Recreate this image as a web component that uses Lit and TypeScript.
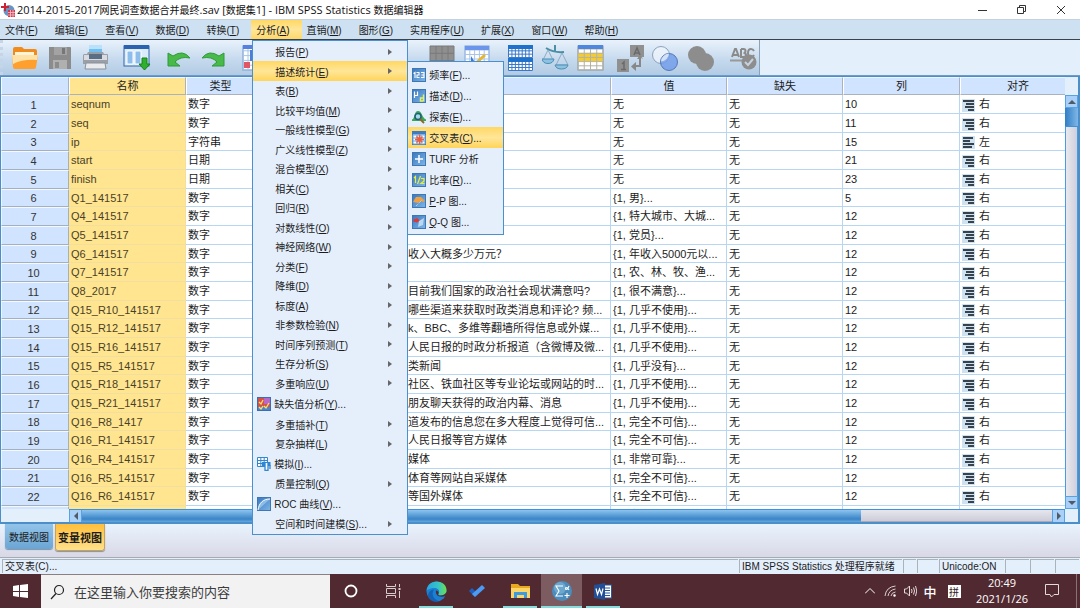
import { LitElement, html, css, svg, nothing } from "lit";
import { customElement, property } from "lit/decorators.js";
import { classMap } from "lit/directives/class-map.js";

type Label = [string, string, string?];
interface MenuEntry { label: Label; icon?: unknown; more?: boolean; sub?: MenuEntry[]; on?: boolean; }

const mnemonic = ([text, key, tail]: Label) => html`${text}${key ? html`(<u>${key}</u>)` : nothing}${tail ?? ""}`;

const gridLines = (x: number, y: number, w: number, h: number, nx: number, ny: number, c: string) => {
  const out: unknown[] = [];
  for (let i = 0; i <= nx; i++) out.push(svg`<path d="M${x + (i * w) / nx} ${y}v${h}" stroke=${c}/>`);
  for (let i = 0; i <= ny; i++) out.push(svg`<path d="M${x} ${y + (i * h) / ny}h${w}" stroke=${c}/>`);
  return out;
};

const tile = (body: unknown) => html`<svg width="14" height="14" viewBox="0 0 14 14" aria-hidden="true">
  <defs><linearGradient id="t" x1="0" y1="0" x2="1" y2="1"><stop offset="0" stop-color="#3a78be"/><stop offset="1" stop-color="#7db6e8"/></linearGradient></defs>
  <rect x=".5" y=".5" width="13" height="13" fill="url(#t)" stroke="#3f77b5"/>${body}</svg>`;

const small = {
  freq: tile(svg`<path d="M1.500 5.500L3 4.500V10M4.500 4.500h2.500V7H5v2.500h2.500M9 4.500h3V9.500H9M9.500 7h2.500" fill="none" stroke="#fff" stroke-width="1.100"/>`),
  desc: tile(svg`<path d="M2.500 9V2.500M2.500 6.500h3M5.500 2.500v4.500" fill="none" stroke="#fff" stroke-width="1.200"/><path d="M11.500 5.500V12M11.500 9h-3v3h3" fill="none" stroke="#dff06a" stroke-width="1.400"/>`),
  explore: html`<svg width="14" height="14" viewBox="0 0 14 14" aria-hidden="true"><path d="M0 9.500C3 9 2 1 6 1s4 7 8 8.500V11H0z" fill="#3aa852"/><circle cx="6" cy="6.500" r="3" fill="#a9d8ea" stroke="#1f5f7a" stroke-width="1.500"/><path d="M8 9l4 4" stroke="#8a6a2c" stroke-width="2"/></svg>`,
  cross: html`<svg width="14" height="14" viewBox="0 0 14 14" aria-hidden="true"><rect x=".5" y=".5" width="13" height="13" fill="#fff" stroke="#3b7dc4"/><path d="M1 2h12" stroke="#3b7dc4" stroke-width="3"/>${gridLines(1, 4, 12, 9, 3, 3, "#6aa5de")}<path d="M7.500 3.500v9.500M3 8.500h9M4.500 5.500l6 6M10.500 5.500l-6 6" stroke="#ee5a3c" stroke-width="1.400"/></svg>`,
  turf: tile(svg`<path d="M7 3v8M3 7h8" stroke="#fff" stroke-width="1.500"/>`),
  ratio: tile(svg`<path d="M2 5l1.500-1.500V10M8.500 3L5.500 11M9 5.500h3V8L9 10.500h3.500" fill="none" stroke="#e6f03c" stroke-width="1.200"/>`),
  pp: tile(svg`<path d="M1 8l3-5h5l4 4-2 1-2-1-3 2z" fill="#f0a040"/><path d="M4 12l6-6" stroke="#cfe6ff" stroke-dasharray="1 1"/>`),
  qq: tile(svg`<path d="M1.500 7V4h3V2.500L8 5.500 4.500 8V7z" fill="#d83a3a"/><path d="M7 6l5-3-1 7-5 2z" fill="#b9d8f2"/>`),
  missing: html`<svg width="14" height="14" viewBox="0 0 14 14" aria-hidden="true"><rect x=".5" y=".5" width="13" height="13" fill="#d6504a" stroke="#3b6db4"/><rect x="7" y="1" width="6" height="6" fill="#b868c8"/><path d="M1 10h12v3H1z" fill="#4a86cc"/><path d="M2 5l2 2 2-4M7 9l2 2 3-5M2 10l2 2 2-3" fill="none" stroke="#f6e36a" stroke-width="1.300"/></svg>`,
  sim: html`<svg width="14" height="14" viewBox="0 0 14 14" aria-hidden="true"><rect x=".5" y=".5" width="10" height="9" fill="#fff"/>${gridLines(0.5, 0.5, 10, 9, 3, 3, "#2f86d2")}<path d="M5 5h8.500v4H5z" fill="#2f86d2"/><path d="M8 6v7.500h3V6M13 8v4" fill="#fff" stroke="#2f86d2" stroke-width="1.300"/></svg>`,
  roc: tile(svg`<path d="M1 13C2 6 6 2 13 2L1 13z" fill="#8dbce6"/><path d="M1 13C2 6 6 2 13 2" fill="none" stroke="#fff"/>`),
};

const SUB: MenuEntry[] = [
  { label: ["频率", "F", "..."], icon: small.freq },
  { label: ["描述", "D", "..."], icon: small.desc },
  { label: ["探索", "E", "..."], icon: small.explore },
  { label: ["交叉表", "C", "..."], icon: small.cross, on: true },
  { label: ["TURF 分析", ""], icon: small.turf },
  { label: ["比率", "R", "..."], icon: small.ratio },
  { label: ["P-P 图...", ""], icon: small.pp },
  { label: ["Q-Q 图...", ""], icon: small.qq },
];

const MENU: MenuEntry[] = [
  { label: ["报告", "P"], more: true },
  { label: ["描述统计", "E"], more: true, sub: SUB, on: true },
  { label: ["表", "B"], more: true },
  { label: ["比较平均值", "M"], more: true },
  { label: ["一般线性模型", "G"], more: true },
  { label: ["广义线性模型", "Z"], more: true },
  { label: ["混合模型", "X"], more: true },
  { label: ["相关", "C"], more: true },
  { label: ["回归", "R"], more: true },
  { label: ["对数线性", "O"], more: true },
  { label: ["神经网络", "W"], more: true },
  { label: ["分类", "F"], more: true },
  { label: ["降维", "D"], more: true },
  { label: ["标度", "A"], more: true },
  { label: ["非参数检验", "N"], more: true },
  { label: ["时间序列预测", "T"], more: true },
  { label: ["生存分析", "S"], more: true },
  { label: ["多重响应", "U"], more: true },
  { label: ["缺失值分析", "Y", "..."], icon: small.missing },
  { label: ["多重插补", "T"], more: true },
  { label: ["复杂抽样", "L"], more: true },
  { label: ["模拟", "I", "..."], icon: small.sim },
  { label: ["质量控制", "Q"], more: true },
  { label: ["ROC 曲线", "V", "..."], icon: small.roc },
  { label: ["空间和时间建模", "S", "..."], more: true },
];

const TOP: Label[] = [
  ["文件", "F"], ["编辑", "E"], ["查看", "V"], ["数据", "D"], ["转换", "T"], ["分析", "A"],
  ["直销", "M"], ["图形", "G"], ["实用程序", "U"], ["扩展", "X"], ["窗口", "W"], ["帮助", "H"],
];

const NO = "无", NUM = "数字", RARE = "{1, 几乎不使用}...", DOUBT = "{1, 完全不可信}...";
const ROWS: [string, string, string, string, string][] = [
  ["seqnum", NUM, "", NO, "10"],
  ["seq", NUM, "", NO, "11"],
  ["ip", "字符串", "", NO, "15"],
  ["start", "日期", "", NO, "21"],
  ["finish", "日期", "", NO, "23"],
  ["Q1_141517", NUM, "", "{1, 男}...", "5"],
  ["Q4_141517", NUM, "", "{1, 特大城市、大城...", "12"],
  ["Q5_141517", NUM, "", "{1, 党员}...", "12"],
  ["Q6_141517", NUM, "收入大概多少万元？", "{1, 年收入5000元以...", "12"],
  ["Q7_141517", NUM, "", "{1, 农、林、牧、渔...", "12"],
  ["Q8_2017", NUM, "目前我们国家的政治社会现状满意吗?", "{1, 很不满意}...", "12"],
  ["Q15_R10_141517", NUM, "哪些渠道来获取时政类消息和评论? 频...", RARE, "12"],
  ["Q15_R12_141517", NUM, "k、BBC、多维等翻墙所得信息或外媒...", RARE, "12"],
  ["Q15_R16_141517", NUM, "人民日报的时政分析报道（含微博及微...", RARE, "12"],
  ["Q15_R5_141517", NUM, "类新闻", "{1, 几乎没有}...", "12"],
  ["Q15_R18_141517", NUM, "社区、铁血社区等专业论坛或网站的时...", RARE, "12"],
  ["Q15_R21_141517", NUM, "朋友聊天获得的政治内幕、消息", RARE, "12"],
  ["Q16_R8_1417", NUM, "道发布的信息您在多大程度上觉得可信...", DOUBT, "12"],
  ["Q16_R1_141517", NUM, "人民日报等官方媒体", DOUBT, "12"],
  ["Q16_R4_141517", NUM, "媒体", "{1, 非常可靠}...", "12"],
  ["Q16_R5_141517", NUM, "体育等网站自采媒体", DOUBT, "12"],
  ["Q16_R6_141517", NUM, "等国外媒体", DOUBT, "12"],
  ["", NUM, "中国、其它媒体平台", DOUBT, "12"],
];

const big = (body: unknown) => html`<svg width="28" height="28" viewBox="0 0 28 28" aria-hidden="true">${body}</svg>`;
const GROUPS: [string, unknown][][] = [
  [
    ["打开", big(svg`<path d="M2 5q0-2 2-2h7l2 2h11q2 0 2 2v7H2z" fill="#f08c1e"/><path d="M4 8h19v8H4z" fill="#fff3d6"/><path d="M1 11h26l-2 12q0 2-2 2H4q-2 0-2-2z" fill="#ff9f2e"/><path d="M1 11h26l-1 5Q12 15 2 20z" fill="#ffe2a8"/>`)],
    ["保存", big(svg`<path d="M3 3h21q1 0 1 1v21H3z" fill="#8c8c8c"/><path d="M8 3h13v8H8z" fill="#a3a3a3"/><path d="M16 4h3v6h-3z" fill="#777"/><path d="M7 16h14v9H7z" fill="#b0b0b0"/><path d="M9 18h4v6H9z" fill="#8c8c8c"/>`)],
    ["打印", big(svg`<path d="M8 1h13v10H8z" fill="#6fc0f2"/><path d="M8 1h13v4H8z" fill="#b9e2fa"/><path d="M3 10h3l1-2h15l1 2h3q1 0 1 1v9H2v-9z" fill="#9aa0a8"/><path d="M3 11h23v5H3z" fill="#d9dbe0"/><path d="M8 10h13v5H8z" fill="#5a6f86"/><path d="M5 19h19l1 6H4z" fill="#e9ebef" stroke="#8b9099"/>`)],
  ],
  [["重新调用对话框", big(svg`<rect x="1" y="2" width="25" height="20" fill="#dcebfa" stroke="#2e66ac"/><path d="M1 1h25v4H1z" fill="#2a62b0"/><path d="M4 7h6v13H4zM12 7h6v13h-6z" fill="#8cbdeb" stroke="#fff"/><path d="M19 14h5v6h3l-5.500 6-5.500-6h3z" fill="#2fae2f" stroke="#15801b"/>`)]],
  [
    ["撤销", big(svg`<path d="M3 9v13h12l-5-4q5-6 15-4Q18 5 8 12z" fill="#49b94a" stroke="#2f9a3a"/>`)],
    ["重做", big(svg`<path d="M24 9v13H12l5-4q-5-6-15-4Q9 5 19 12z" fill="#49b94a" stroke="#2f9a3a"/>`)],
  ],
  [["转到个案", big(svg`<rect x="1" y="2" width="25" height="24" fill="#fff" stroke="#5a86c8"/>${gridLines(1, 2, 25, 24, 5, 5, "#a9c4e8")}<path d="M1 1h25v4H1z" fill="#5580e0"/><path d="M2 18h6v6H2z" fill="#e25565"/><path d="M8 6h8v11H8z" fill="#4a7fd8"/>`)]],
  [
    ["插入个案", big(svg`<path d="M2 2h24v22H2z" fill="#8f8f8f"/>${gridLines(2, 2, 24, 22, 4, 3, "#7a7a7a")}`)],
    ["插入变量", big(svg`<rect x="2" y="2" width="24" height="22" fill="#fff" stroke="#7da2d8"/>${gridLines(2, 6, 24, 18, 5, 4, "#a9c4e8")}<path d="M2 2h24v4H2z" fill="#6a95ea"/><path d="M8 12l5 8 4-5 2 6H8z" fill="#3b78d8"/><path d="M12 18l9-8 2 2-9 8z" fill="#e8b62c"/>`)],
  ],
  [
    ["拆分文件", big(svg`<path d="M1 3h25v11H1zM1 17h25v10H1z" fill="#fff"/>${gridLines(1.500, 3.500, 24, 10, 7, 3, "#3a78c8")}${gridLines(1.500, 17.500, 24, 9, 7, 3, "#3a78c8")}<path d="M1 1h25v4H1zM1 14h25v4H1z" fill="#1e72cc"/>`)],
    ["个案加权", big(svg`<path d="M4 4q8 5 18 4M13 1v7" fill="none" stroke="#4b8fa6" stroke-width="2"/><path d="M6 6l-5 10h10zM20 9l-6 12h12z" fill="none" stroke="#8eabc2"/><path d="M0 15h12q-1 4.500-6 4.500T0 15zM13 21h13q-1 4-6.500 4T13 21z" fill="#8cc3e2" stroke="#4d8eb4"/>`)],
    ["选择个案", big(svg`<rect x="1" y="2" width="25" height="24" fill="#fff" stroke="#7d90a8"/><path d="M1 9h25v8H1z" fill="#f5cc30"/>${gridLines(1, 5, 25, 21, 4, 5, "#b3b3a4")}<path d="M1 1h25v4H1z" fill="#4f86e0"/>`)],
  ],
  [
    ["值标签", big(svg`<path d="M14 1h14v12H14zM1 15h12v13H1z" fill="#909090"/><path d="M18 11l3-7 3 7M19 9h4M6 20l2-2v7M5 25.500h5" fill="none" stroke="#6a6a6a" stroke-width="1.500"/><path d="M25 14v9h-5v4l-5-4.500 5-4.500v3h3v-6h-2l3-4 3 4z" fill="#888"/>`)],
    ["使用变量集", big(svg`<circle cx="10" cy="11" r="8.500" fill="#eef4fb" fill-opacity=".8" stroke="#8fa2bb"/><circle cx="18" cy="18" r="8.500" fill="#6f9bea" fill-opacity=".8" stroke="#5478b8"/><path d="M18 9.500a8.500 8.500 0 0 0-8 8 8.500 8.500 0 0 0 8-8z" fill="#d4e1f5"/>`)],
    ["显示所有变量", big(svg`<circle cx="11" cy="11" r="9" fill="#8d8d8d"/><circle cx="19" cy="18" r="9" fill="#8d8d8d"/>`)],
  ],
  [["拼写检查", big(svg`<path d="M3 13l3-8h1l3 8M4 11h5M12 5v8h2.500q2.500 0 2.500-2T14.500 9q2 0 2-2t-2-2H12M25 7q-1-2-3-2-3 0-3 4t3 4q2 0 3-2" fill="none" stroke="#8b8b8b" stroke-width="2"/><path d="M1 16.500h14" stroke="#999" stroke-width="2"/><circle cx="20" cy="18" r="7.500" fill="#8d8d8d"/><path d="M16 18l3 3 5-6" fill="none" stroke="#c6d2de" stroke-width="2"/>`)]],
];

const alignGlyph = (left: boolean) => html`<svg class="al" width="13" height="13" viewBox="0 0 13 13" aria-hidden="true">
  <rect width="13" height="13" fill="#cfe2f1"/>
  <path d=${left ? "M1 2h10M1 5h7M1 8h11M1 11h9" : "M1 2h11M4 5h8M3 8h9M6 11h6"} stroke="#37424c" stroke-width="2"/></svg>`;

@customElement("menu-list")
class MenuList extends LitElement {
  @property({ attribute: false }) entries: MenuEntry[] = [];
  @property({ type: Boolean }) compact = false;
  static styles = css`
    :host { display: block; background: #e5effc; border: 1px solid #4a8fd0; padding: 1px 0; box-sizing: border-box; }
    :host([compact]) { padding: 2px 0; }
    ul { list-style: none; margin: 0; padding: 0; }
    li { position: relative; height: 19px; }
    li:nth-child(even) { height: 20px; }
    li.pic, :host([compact]) li { height: 21px; }
    button { display: flex; align-items: center; width: 100%; height: 100%; border: 0; margin: 0; padding: 0 15px 0 22px;
      background: none; color: #1c1c1c; font: 10px "Liberation Sans", "Noto Sans CJK SC", sans-serif; text-align: left; white-space: nowrap; }
    .pic > button { padding-left: 4px; gap: 3px; }
    .on > button { background: linear-gradient(#ffd763, #ffe698 50%, #ffd45a); }
    .grow { flex: 1; }
    .arrow { border: 3px solid transparent; border-left: 4px solid #666; border-right: 0; }
    .sub { position: absolute; left: 100%; top: 0; width: 97px; z-index: 2; }
    svg { flex: none; }
  `;
  render() {
    return html`<ul role="menu">${this.entries.map((e) => html`
      <li role="none" class=${classMap({ pic: !!e.icon, on: !!e.on })}>
        <button role="menuitem">${e.icon ?? nothing}<span class="grow">${this.text(e.label)}</span>${e.more ? html`<span class="arrow"></span>` : nothing}</button>
        ${e.sub ? html`<menu-list class="sub" compact .entries=${e.sub}></menu-list>` : nothing}
      </li>`)}</ul>`;
  }
  private text(l: Label) {
    if (/^[PQ]-/.test(l[0])) return html`<u>${l[0][0]}</u>${l[0].slice(1)}`;
    return mnemonic(l);
  }
}

@customElement("task-bar")
class TaskBar extends LitElement {
  static styles = css`
    :host { display: flex; height: 34px; background: #512a31; color: #fff; }
    button { border: 0; padding: 0; margin: 0; background: none; color: inherit; display: flex; align-items: center; justify-content: center; }
    .start { width: 41px; }
    .search { display: flex; align-items: center; width: 289px; background: #f2f2f2; gap: 9px; padding-left: 9px; box-sizing: border-box; border-top: 1px solid #8c7f82; }
    .search input { flex: 1; min-width: 0; border: 0; background: none; outline: 0; padding: 0; font: 13px "Noto Sans CJK SC", sans-serif; }
    .search input::placeholder { color: #3c3c3c; opacity: 1; }
    .apps { display: flex; padding-left: 1px; }
    .apps button { width: 40px; margin-right: 2px; box-sizing: border-box; border-bottom: 2px solid transparent; padding-top: 2px; }
    .apps .open { width: 34px; margin: 0 4px; border-color: #86dcda; }
    .apps .current { width: 41px; margin: 0; background: #7c5c61; border-color: #86dcda; }
    .fill { flex: 1; }
    .tray { display: flex; align-items: center; }
    .tray button { width: 20px; height: 34px; }
    .tray .ime { font: 500 13px "Noto Sans CJK SC", sans-serif; }
    .tray .pin { width: 28px; }
    .pin span { background: #fff; color: #332024; font: 10px/13px "Noto Sans CJK SC", sans-serif; width: 13px; height: 13px; }
    .tray .clock { width: 68px; flex-direction: column; font: 11px/16px "Open Sans", sans-serif; }
    .tray .note { width: 32px; }
    .edge { width: 9px; box-sizing: border-box; border-right: 1px solid #8a7175; margin-right: 3px; align-self: stretch; }
  `;
  render() {
    return html`
      <button class="start" aria-label="开始"><svg width="15" height="14" viewBox="0 0 15 14"><path d="M0 2l6-1v6H0zM7 1l8-1v7H7zM0 8h6v5l-6-1zM7 8h8v6l-8-1z" fill="#fff"/></svg></button>
      <label class="search"><svg width="15" height="16" viewBox="0 0 15 16" fill="none" stroke="#222" stroke-width="1.200"><circle cx="9" cy="6" r="4.500"/><path d="M6 9.500L1 15"/></svg>
        <input type="search" aria-label="搜索" placeholder="在这里输入你要搜索的内容"></label>
      <div class="apps">
        <button aria-label="Cortana"><svg width="14" height="14"><circle cx="7" cy="7" r="5.500" fill="none" stroke="#fff" stroke-width="1.800"/></svg></button>
        <button aria-label="任务视图"><svg width="15" height="14" viewBox="0 0 15 14" fill="none" stroke="#d9cdcf"><path d="M.5 0v2.500h9V0M.5 4.500h9v5h-9zM.5 14v-2.500h9V14M13.500 0v3M13.500 7v7"/><path d="M12.500 5h2" stroke-width="2"/></svg></button>
        <button class="open" aria-label="Edge"><svg width="21" height="21" viewBox="0 0 21 21"><defs><linearGradient id="e" x1="0" x2="1"><stop offset="0" stop-color="#27a5e4"/><stop offset=".6" stop-color="#36c5c4"/><stop offset="1" stop-color="#6be04c"/></linearGradient></defs><circle cx="10.500" cy="10.500" r="10" fill="#1a80d4"/><path d="M.5 10C1 4 5 .5 10.500.5c6 0 10 4 10 8.500 0 4-3 5.500-6 5.500-2 0-3-1-2-2 2-3-.5-5.500-4-5.500C4 7 1 9 .5 10z" fill="url(#e)"/><path d="M8 8.500c-3 4-1 10 5 11.500-5 2-10-1-11-5 0-3 2-6 6-6.500z" fill="#1360b4"/><path d="M10 9.500c-1 5 4 8 10.500 5l.5-3.500q-3 3.500-6.500 3.500-3 0-2-2 1-2-2.500-3z" fill="#512a31"/></svg></button>
        <button aria-label="待办"><svg width="16" height="14" viewBox="0 0 16 14"><path d="M0 7l3-3 4 4-1 5z" fill="#1f5fc0"/><path d="M3 10L13 1l3 3-10 9z" fill="#4b9bf5"/></svg></button>
        <button class="open" aria-label="文件资源管理器"><svg width="19" height="16" viewBox="0 0 19 16"><path d="M0 1h7l2 2h10v12H0z" fill="#e8a820"/><path d="M0 5h19v10H0z" fill="#fbd667"/><path d="M3 15V9h13v6h-3v-3H6v3z" fill="#3d9ae0"/></svg></button>
        <button class="current" aria-label="SPSS"><svg width="20" height="20" viewBox="0 0 20 20"><circle cx="10" cy="10" r="10" fill="#4a8dbd"/><circle cx="8" cy="7" r="6" fill="#84b9d9" opacity=".6"/><path d="M11 5H4l3 5-3 5h7M17 5l-1.500 3q-2 1-2-.5t2-.5L17 9M15 12v5M12.500 14.500h5" fill="none" stroke="#fff" stroke-width="1.100"/></svg></button>
        <button class="open" aria-label="Word"><svg width="18" height="17" viewBox="0 0 18 17"><rect x="8" y="2" width="9.500" height="13" fill="#fff" stroke="#2b579a"/><path d="M11 5h5M11 7.500h5M11 10h5M11 12.500h5" stroke="#2b579a"/><path d="M0 2l11-2v17L0 15z" fill="#234f96"/><path d="M2 5.500l1.500 6 2-5.500 2 5.500L9 5.500" fill="none" stroke="#fff" stroke-width="1.200"/></svg></button>
      </div>
      <div class="fill"></div>
      <div class="tray">
        <button aria-label="显示隐藏的图标"><svg width="10" height="6" fill="none" stroke="#fff"><path d="M0 5.500l5-5 5 5"/></svg></button>
        <button aria-label="网络"><svg width="12" height="12" viewBox="0 0 12 12" fill="none" stroke="#d9cdcf"><path d="M1 11Q2 2 11.500 1M4 11Q5 5 11.500 4M7 11q.5-3.500 4.500-4"/><circle cx="10.500" cy="10.500" r="1" fill="#fff"/></svg></button>
        <button aria-label="音量"><svg width="13" height="12" viewBox="0 0 13 12" fill="none" stroke="#e4dadb"><path d="M.5 4h2l3-3v10l-3-3h-2zM7.500 4q1 2 0 4M9.500 2.500q2 3.500 0 7M11.500 1q2.500 5 0 10"/></svg></button>
        <button class="ime">中</button>
        <button class="pin"><span>拼</span></button>
        <button class="clock"><span>20:49</span><span>2021/1/26</span></button>
        <button class="note" aria-label="通知"><svg width="14" height="14" viewBox="0 0 14 14" fill="none" stroke="#e4dadb"><path d="M.5.5h13v10H9L6.500 13 5 10.500H.5z"/></svg></button>
        <span class="edge"></span>
      </div>`;
  }
}

@customElement("app-root")
class AppRoot extends LitElement {
  static styles = css`
    :host { display: flex; flex-direction: column; height: 100vh; overflow: hidden; background: #e4effc; color: #1c1c1c;
      font: 10px "Liberation Sans", "Noto Sans CJK SC", sans-serif; }
    button { font: inherit; color: inherit; border: 0; margin: 0; padding: 0; background: none; }
    header { display: flex; align-items: center; height: 19px; background: #fff; color: #111; padding-left: 1px; border-bottom: 1px solid #c3d2dd; flex: none; }
    h1 { flex: 1; margin: 0 0 0 2px; font: 10px/18px "Noto Sans CJK SC", sans-serif; white-space: pre; }
    h1 span { font: 11px "Open Sans", sans-serif; }
    .win { width: 39px; height: 18px; display: flex; align-items: center; justify-content: center; }
    nav { display: flex; height: 19px; background: #cee1f2; border-bottom: 1px solid #3a434c; flex: none; }
    .top { position: relative; display: flex; }
    .top > button { padding: 0 12px 0 5px; white-space: nowrap; }
    .top.open > button { background: linear-gradient(#ffd763, #ffe698 50%, #ffd868); }
    .drop { position: absolute; left: 1px; top: 20px; width: 156px; z-index: 5; }
    .tools { display: flex; height: 35px; border-bottom: 1px solid #6d9cc8; flex: none; }
    .strip { display: grid; grid-template-columns: 112px 42px 77px 186px 79px 109px 113px 28px; padding: 0 2px 0 8px; align-items: center;
      background: linear-gradient(#e9f2fc, #c3d8ec 60%, #b2cbe4); border-right: 1px solid #8ba3ba; border-left: 3px dotted #c6d5e6; }
    .set { display: flex; gap: 7px; }
    .set button, .set svg { display: block; width: 28px; height: 28px; }
    main { flex: 1; min-height: 0; display: grid; grid-template: minmax(0, 1fr) 13px / 68px minmax(0, 1fr) 13px; border: 1px solid #4a8fca; border-width: 1px 2px 2px 1px; }
    .view { grid-column: 1 / 3; overflow: hidden; background: #fff; }
    table { width: calc(100% + 11px); table-layout: fixed; border-collapse: separate; border-spacing: 0; font-size: 11px; }
    .c0 { width: 68px; } .c1 { width: 117px; } .c2 { width: 69px; } .c3 { width: 151px; } .c4 { width: 205px; } .c5, .c6 { width: 116px; }
    .c7 { width: 117px; }
    th, td { box-sizing: border-box; padding: 0; overflow: hidden; white-space: nowrap; font-weight: 400; text-align: left; line-height: 16px; height: 19px; }
    tr:nth-child(3n) > * { height: 18px; }
    thead th { text-align: center; height: 18px; line-height: 16px; background: #d0e4ff; border: 1px solid #aab2bd; border-left-color: #fff; border-top-color: #eef5ff; }
    thead .name, td.name { background: #ffe58f; }
    tbody th { text-align: center; background: #d0e4ff; border: 1px solid #a3b0c0; border-top-color: #f4f9ff; border-left-color: #eef5ff; color: #333; padding-right: 3px; }
    td { border-bottom: 1px solid #b7d6f2; border-right: 1px solid #b7d6f2; padding-left: 2px; }
    td.name { border-color: #f2dfa0; color: #4a3f2a; }
    td:last-child { border-right: 0; }
    .al { vertical-align: middle; margin-right: 4px; }
    .vs { display: flex; flex-direction: column; padding-top: 18px; }
    .vs .track { flex: 1; background: linear-gradient(90deg, #e9e9ef, #cfcfdc); border: solid #4a9ae0; border-width: 0 1px; }
    .sb { display: flex; align-items: center; justify-content: center; width: 13px; height: 13px; flex: none; background: #a9d0f8; border: 1px solid #57a2e2; box-sizing: border-box; }
    .vs .thumb { height: 18px; background: linear-gradient(90deg, #2f7ec4, #80b6e8); border-bottom: 1px solid #3d92de; }
    .hs { grid-column: 2; display: flex; border-top: 1px solid #3d92de; box-sizing: border-box; height: 13px; min-width: 0; }
    .hs .sb { height: 12px; border-width: 0 1px; }
    .hs .thumb { flex: 781; background: linear-gradient(#8cc4f0, #3a84c6 75%, #65a8e0); }
    .hs .track { flex: 192; background: linear-gradient(#e6e6ee, #cdcdda); border-bottom: 1px solid #aab; }
    .tabs { display: flex; height: 33px; padding-left: 5px; gap: 2px; align-items: flex-start; background: linear-gradient(#e8f3fd, #d9d8e6); flex: none; }
    .tabs button { width: 48px; height: 25px; background: linear-gradient(#93c4e8, #6ba5d4); border-radius: 0 0 3px 3px; box-shadow: 0 1px 1px #7d94aa; }
    .tabs .sel { width: 50px; height: 27px; font-size: 11px; font-weight: 700; background: linear-gradient(#ffbf3c, #ffe08a); border: 1px solid #c9a258; border-top: 0; box-sizing: border-box; white-space: nowrap; }
    footer { display: flex; height: 17px; align-items: stretch; border-top: 1px solid #a5abb3; box-sizing: border-box; padding: 1px 0 1px 2px; line-height: 14px; }
    footer > * { border-left: 1px solid #aab2ba; border-top: 1px solid #aab2ba; box-sizing: border-box; white-space: nowrap; padding-left: 2px; margin-right: 1px; }
    .msg { flex: 1; }
    .ready { width: 163px; } .s1 { width: 13px; } .s2 { width: 21px; } .uni { width: 65px; } .s3 { width: 24px; }
    footer, task-bar { flex: none; }
  `;
  private arrow(d: string) {
    return html`<svg width="8" height="8" viewBox="0 0 8 8" aria-hidden="true"><path d=${d} fill="#4f5b66"/></svg>`;
  }
  render() {
    return html`
      <header>
        <svg width="14" height="16" viewBox="0 0 14 16" aria-hidden="true"><circle cx="8" cy="8.500" r="5.500" fill="#6a94c4"/><path d="M7 8h7v7H7z" fill="#d8374c"/><path d="M7 10.500h7M7 13h7M9.500 8v7M12 8v7" stroke="#f3c9d0" stroke-width=".8"/><path d="M4 1v8M0 5h8" stroke="#cc2233" stroke-width="2"/></svg>
        <h1><span>2014-2015-2017</span>网民调查数据合并最终<span>.sav [</span>数据集<span>1] - IBM SPSS Statistics </span>数据编辑器</h1>
        <button class="win" aria-label="最小化"><svg width="10" height="10"><path d="M0 5.500h9" stroke="#333"/></svg></button>
        <button class="win" aria-label="还原"><svg width="10" height="10" fill="none" stroke="#333"><path d="M.5 2.500h6v6h-6zM2.500 2.500v-2h6v6h-2"/></svg></button>
        <button class="win" aria-label="关闭"><svg width="10" height="10" stroke="#333"><path d="M1 1l8 8M9 1l-8 8"/></svg></button>
      </header>
      <nav>${TOP.map((t, i) => html`<div class=${classMap({ top: true, open: i === 5 })}>
        <button>${mnemonic(t)}</button>${i === 5 ? html`<menu-list class="drop" .entries=${MENU}></menu-list>` : nothing}</div>`)}</nav>
      <div class="tools"><div class="strip" role="toolbar">${GROUPS.map((g) => html`<div class="set">${g.map(([n, ic]) => html`<button aria-label=${n}>${ic}</button>`)}</div>`)}</div></div>
      <main>
        <div class="view"><table>
          <colgroup>${[0, 1, 2, 3, 4, 5, 6, 7, 8].map((n) => html`<col class="c${n}">`)}</colgroup>
          <thead><tr><th></th><th class="name">名称</th><th>类型</th><th></th><th></th><th>值</th><th>缺失</th><th>列</th><th>对齐</th></tr></thead>
          <tbody>${ROWS.map((r, i) => html`<tr><th scope="row">${i < 22 ? i + 1 : ""}</th><td class="name">${r[0]}</td><td>${r[1]}</td><td></td><td>${r[2]}</td><td>${r[3]}</td><td>${NO}</td><td>${r[4]}</td><td>${alignGlyph(i === 2)}${i === 2 ? "左" : "右"}</td></tr>`)}</tbody>
        </table></div>
        <div class="vs"><span class="sb">${this.arrow("M0 6l4-4 4 4z")}</span><span class="thumb"></span><span class="track"></span><span class="sb">${this.arrow("M0 2l4 4 4-4z")}</span></div>
        <div class="hs"><span class="sb">${this.arrow("M6 0L2 4l4 4z")}</span><span class="thumb"></span><span class="track"></span><span class="sb">${this.arrow("M2 0l4 4-4 4z")}</span></div>
      </main>
      <div class="tabs" role="tablist"><button role="tab">数据视图</button><button role="tab" class="sel" aria-selected="true">变量视图</button></div>
      <footer><span class="msg">交叉表(C)...</span><span class="ready">IBM SPSS Statistics 处理程序就绪</span><span class="s1"></span><span class="s2"></span><span class="uni">Unicode:ON</span><span class="s3"></span><span class="s3"></span><span class="s3"></span></footer>
      <task-bar></task-bar>`;
  }
}
